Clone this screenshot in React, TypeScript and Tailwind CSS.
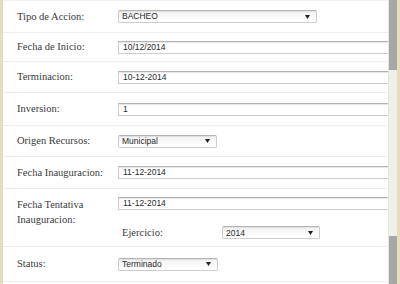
import React from "react";

const serif = { fontFamily: '"Liberation Serif", "DejaVu Serif", serif' } as const;
const sans = { fontFamily: '"Liberation Sans", Arial, sans-serif' } as const;

function Arrow() {
  return (
    <svg width="5" height="4" viewBox="0 0 5 4" className="shrink-0">
      <path d="M0 0 L5 0 L2.5 4 Z" fill="#222" />
    </svg>
  );
}

function Input({ value }: { value: string }) {
  return (
    <div
      className="h-[13px] w-[280px] shrink-0 border border-[#cdcdcd] border-t-[#b4b4b4] bg-white shadow-[inset_0_1px_1px_rgba(0,0,0,0.1)] pl-[4px] flex items-center text-[8.5px] leading-none text-[#2a2a2a]"
      style={sans}
    >
      {value}
    </div>
  );
}

function Select({ value, w }: { value: string; w: string }) {
  return (
    <div
      className={`h-[13px] ${w} shrink-0 rounded-[2px] border border-[#cdcdcd] border-t-[#b4b4b4] bg-gradient-to-b from-[#f2f2f2] to-white shadow-[inset_0_1px_1px_rgba(0,0,0,0.08)] pl-[3px] pr-[6px] flex items-center justify-between text-[8.5px] leading-none text-[#2a2a2a]`}
      style={sans}
    >
      <span>{value}</span>
      <Arrow />
    </div>
  );
}

function Row({
  label,
  h,
  children,
}: {
  label: string;
  h: string;
  children: React.ReactNode;
}) {
  return (
    <div className={`${h} flex items-center border-b border-[#eeeeee] pl-[14px]`}>
      <div className="w-[101px] shrink-0 text-[10.5px] text-[#3a3a3a]" style={serif}>
        {label}
      </div>
      {children}
    </div>
  );
}

export default function App() {
  return (
    <div className="w-[400px] h-[284px] flex overflow-hidden bg-white">
      <div className="w-[3px] h-full bg-[#e6ddbd] shrink-0" />
      <div className="flex-1 min-w-0 overflow-hidden flex flex-col">
        <Row label="Tipo de Accion:" h="h-[33px] border-t border-t-[#f2f2f2]">
          <Select value="BACHEO" w="w-[199px]" />
        </Row>
        <Row label="Fecha de Inicio:" h="h-[29px]">
          <Input value="10/12/2014" />
        </Row>
        <Row label="Terminacion:" h="h-[31px]">
          <Input value="10-12-2014" />
        </Row>
        <Row label="Inversion:" h="h-[33px]">
          <Input value="1" />
        </Row>
        <Row label="Origen Recursos:" h="h-[31px]">
          <Select value="Municipal" w="w-[99px]" />
        </Row>
        <Row label="Fecha Inauguracion:" h="h-[32px]">
          <Input value="11-12-2014" />
        </Row>
        <div className="h-[58px] border-b border-[#eeeeee] flex flex-col pt-[8px]">
          <div className="flex pl-[14px]">
            <div
              className="w-[101px] shrink-0 text-[10.5px] leading-[15px] text-[#3a3a3a]"
              style={serif}
            >
              Fecha Tentativa
              <br />
              Inauguracion:
            </div>
            <Input value="11-12-2014" />
          </div>
          <div className="flex items-center pl-[119px] -mt-[2px]">
            <div className="w-[100px] shrink-0 text-[10.5px] text-[#3a3a3a]" style={serif}>
              Ejercicio:
            </div>
            <Select value="2014" w="w-[98px]" />
          </div>
        </div>
        <Row label="Status:" h="h-[35px]">
          <Select value="Terminado" w="w-[100px]" />
        </Row>
      </div>
      <div className="w-[9px] h-full shrink-0 flex flex-col bg-[#f1efe9] border-l border-[#e4e4e4]">
        <div className="h-[70px] bg-[#a7a7a7]" />
        <div className="flex-1" />
        <div className="h-[48px] bg-[#a7a7a7]" />
      </div>
      <div className="w-[3px] h-full bg-[#e6ddbd] shrink-0" />
    </div>
  );
}
